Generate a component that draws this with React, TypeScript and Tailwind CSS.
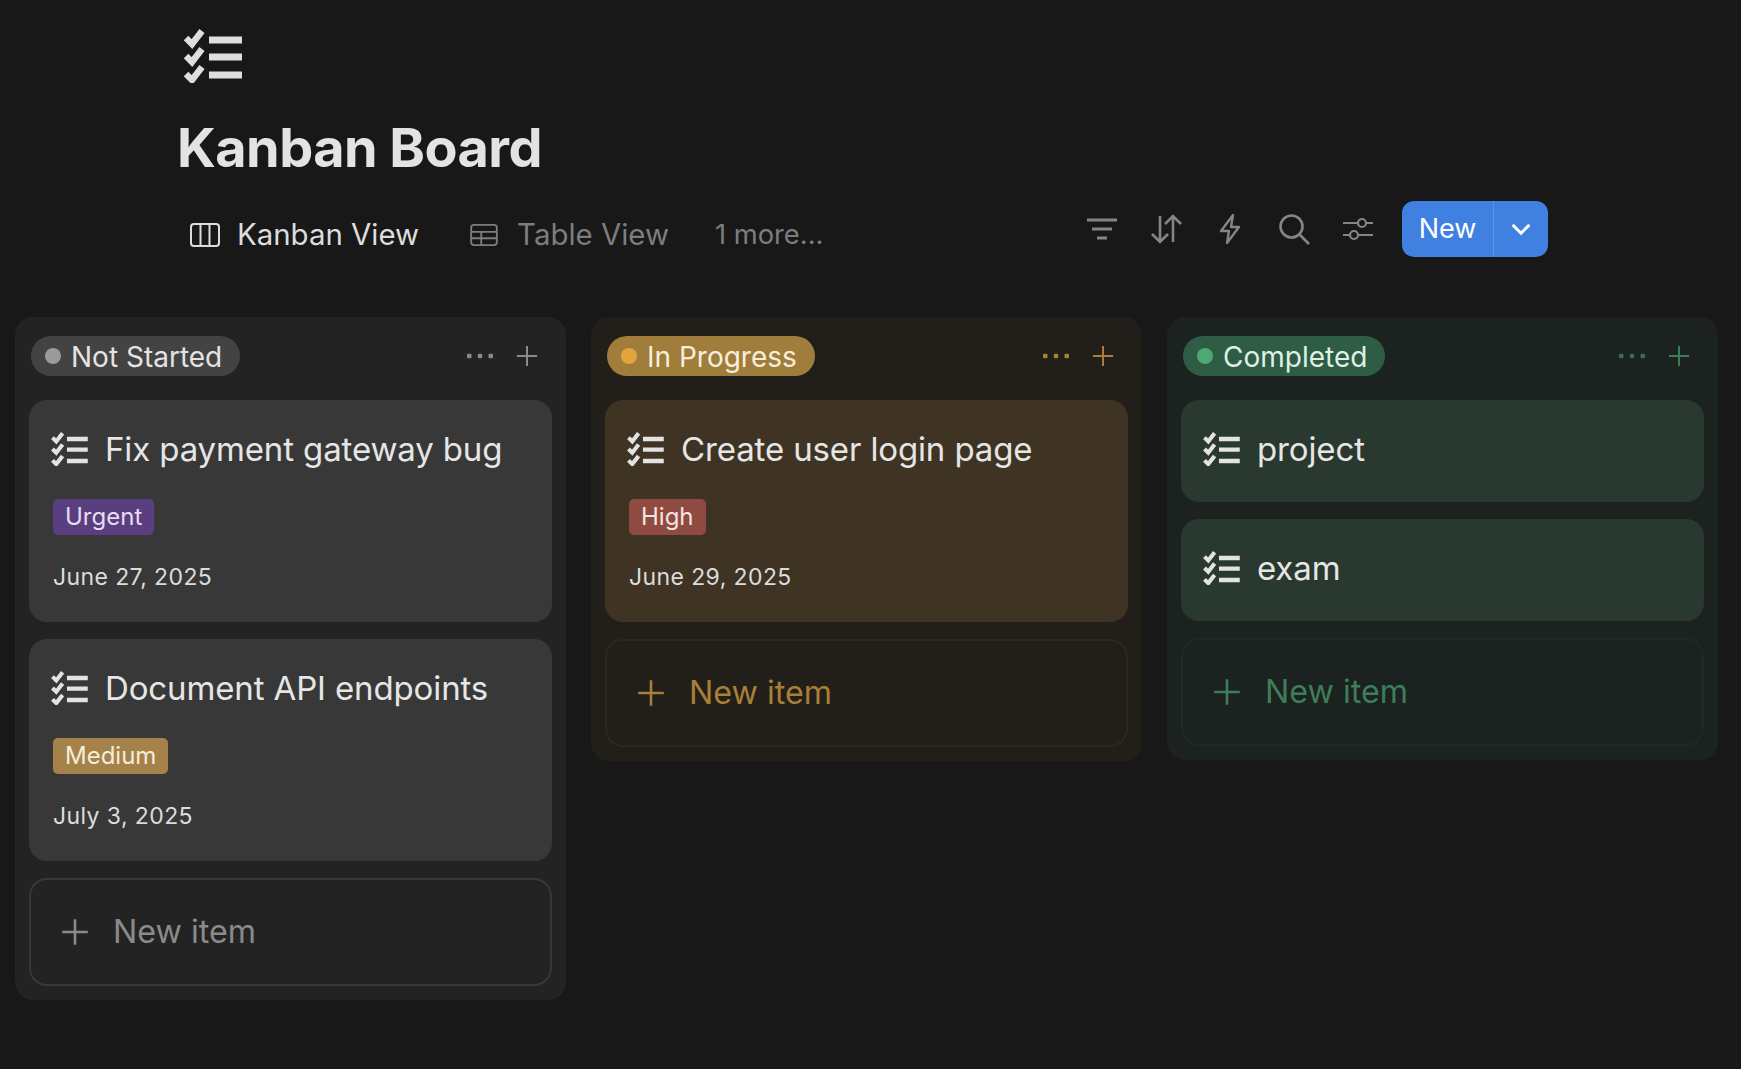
import React from "react";

const Check = ({ className = "" }: { className?: string }) => (
  <svg viewBox="0 0 58 54" className={className} fill="none" stroke="currentColor">
    <path d="M2 9l6 6L18 2M2 27l6 6 10-13M2 45l6 6 10-13" strokeWidth="6.5" />
    <path d="M25 11h33M25 28h33M25 46h33" strokeWidth="7" />
  </svg>
);

const Plus = ({ className = "" }: { className?: string }) => (
  <svg viewBox="0 0 24 24" className={className} fill="none" stroke="currentColor" strokeWidth="2.2">
    <path d="M12 1v22M1 12h22" />
  </svg>
);

const Dots = ({ className = "" }: { className?: string }) => (
  <svg viewBox="0 0 26 6" className={className} fill="currentColor">
    <rect x="0" y="0.75" width="4.5" height="4.5" rx="1.2" />
    <rect x="10.75" y="0.75" width="4.5" height="4.5" rx="1.2" />
    <rect x="21.5" y="0.75" width="4.5" height="4.5" rx="1.2" />
  </svg>
);

type Card = { title: string; tag?: string; tagCls?: string; date?: string };
type Col = {
  name: string;
  col: string;
  pill: string;
  dot: string;
  card: string;
  accent: string;
  dots: string;
  border: string;
  cards: Card[];
};

const cols: Col[] = [
  {
    name: "Not Started",
    col: "bg-[#232323]",
    pill: "bg-[#434343] text-[#e3e3e3]",
    dot: "bg-[#9b9b9b]",
    card: "bg-[#383838]",
    accent: "text-[#8a8a8a]",
    dots: "text-[#8a8a8a]",
    border: "border-[#383838]",
    cards: [
      { title: "Fix payment gateway bug", tag: "Urgent", tagCls: "bg-[#5a3f80] text-[#e6dcf2]", date: "June 27, 2025" },
      { title: "Document API endpoints", tag: "Medium", tagCls: "bg-[#a5824a] text-[#f6ecd8]", date: "July 3, 2025" },
    ],
  },
  {
    name: "In Progress",
    col: "bg-[#221e1a]",
    pill: "bg-[#a17d3c] text-[#f6eedd]",
    dot: "bg-[#e2a63c]",
    card: "bg-[#3f3424]",
    accent: "text-[#a87f36]",
    dots: "text-[#a87f36]",
    border: "border-[#2e2720]",
    cards: [
      { title: "Create user login page", tag: "High", tagCls: "bg-[#8f4a42] text-[#f5e4e0]", date: "June 29, 2025" },
    ],
  },
  {
    name: "Completed",
    col: "bg-[#1b2220]",
    pill: "bg-[#2f5c45] text-[#dff0e5]",
    dot: "bg-[#4fa872]",
    card: "bg-[#29392f]",
    accent: "text-[#3d7d59]",
    dots: "text-[#3a6a50]",
    border: "border-[#1f2925]",
    cards: [{ title: "project" }, { title: "exam" }],
  },
];

function TaskCard({ c, col }: { c: Card; col: Col }) {
  return (
    <div className={`rounded-[18px] px-[24px] pt-[31px] ${col.card} ${c.tag ? "h-[222px]" : "h-[102px]"}`}>
      <div className="flex items-center gap-[17px] h-[36px]">
        <Check className="w-[37px] h-[34px] text-[#e3e3e3] -ml-[2px] shrink-0" />
        <span className="text-[33px] leading-[36px] tracking-[-0.13px] text-[#e6e6e6]">{c.title}</span>
      </div>
      {c.tag && (
        <>
          <div className="mt-[32px] flex">
            <span className={`h-[36px] px-[12px] rounded-[5px] text-[24px] leading-[36px] ${c.tagCls}`}>{c.tag}</span>
          </div>
          <div className="mt-[26px] text-[23px] leading-[32px] tracking-[0.4px] text-[#dcdcdc]">{c.date}</div>
        </>
      )}
    </div>
  );
}

function Column({ col }: { col: Col }) {
  return (
    <div className={`w-[551px] rounded-[18px] px-[14px] pt-[19px] pb-[14px] ${col.col}`}>
      <div className="flex items-center justify-between h-[40px] pl-[2px] pr-[14px]">
        <div className={`h-[40px] rounded-full flex items-center pl-[14px] pr-[18px] gap-[10px] ${col.pill}`}>
          <span className={`w-[16px] h-[16px] rounded-full ${col.dot}`} />
          <span className="text-[28px] leading-[40px] pt-[1px]">{col.name}</span>
        </div>
        <div className="flex items-center gap-[23px]">
          <Dots className={`w-[26px] h-[6px] ${col.dots}`} />
          <Plus className={`w-[22px] h-[22px] ${col.accent}`} />
        </div>
      </div>
      <div className="mt-[24px] flex flex-col gap-[17px]">
        {col.cards.map((c) => (
          <TaskCard key={c.title} c={c} col={col} />
        ))}
        <div className={`h-[108px] rounded-[18px] border-2 ${col.border} flex items-center pl-[30px] gap-[24px]`}>
          <Plus className={`w-[28px] h-[28px] ${col.accent}`} />
          <span className={`text-[32.25px] leading-[40px] ${col.accent}`}>New item</span>
        </div>
      </div>
    </div>
  );
}

function Tool({ children }: { children: React.ReactNode }) {
  return <div className="w-[64px] flex items-center justify-center">{children}</div>;
}

export default function App() {
  return (
    <div className="min-h-[1069px] bg-[#181818] font-['Inter',sans-serif] overflow-hidden">
      <div className="pl-[177px] pt-[29px]">
        <Check className="w-[58px] h-[54px] ml-[7px] text-[#dedede]" />
        <h1 className="mt-[31px] text-[54px] leading-[68px] font-bold tracking-[-0.55px] text-[#e3e3e3]">Kanban Board</h1>
        <div className="mt-[19px] flex items-center h-[56px] pl-[13px] w-[1371px]">
          <svg viewBox="0 0 30 24" className="w-[30px] h-[24px] text-[#dcdcdc] mt-[11px]" fill="none" stroke="currentColor" strokeWidth="2">
            <rect x="1" y="1" width="28" height="22" rx="3" />
            <path d="M10.5 1v22M19.5 1v22" />
          </svg>
          <span className="ml-[17px] text-[29.4px] leading-[40px] text-[#dcdcdc] mt-[11px]">Kanban View</span>
          <svg viewBox="0 0 30 24" className="ml-[50px] w-[30px] h-[22px] text-[#7d7d7d] mt-[11px]" fill="none" stroke="currentColor" strokeWidth="2">
            <rect x="1" y="1" width="28" height="22" rx="3" />
            <path d="M1 8.5h28M1 15.5h28M12 8.5V23" />
          </svg>
          <span className="ml-[18px] text-[29.4px] leading-[40px] text-[#7d7d7d] mt-[11px]">Table View</span>
          <span className="ml-[46px] text-[27.3px] leading-[40px] text-[#7d7d7d] mt-[11px]">1 more...</span>
          <div className="ml-auto flex items-center text-[#858585]">
            <Tool>
              <svg viewBox="0 0 32 24" className="w-[32px] h-[24px]" fill="none" stroke="currentColor" strokeWidth="3">
                <path d="M1 3h30M6 12h20M11 21h10" />
              </svg>
            </Tool>
            <Tool>
              <svg viewBox="0 0 32 30" className="w-[32px] h-[30px]" fill="none" stroke="currentColor" strokeWidth="2.6">
                <path d="M10 2v26M2 20l8 8 8-8M23 28V2M15 10l8-8 8 8" />
              </svg>
            </Tool>
            <Tool>
              <svg viewBox="0 0 24 32" className="w-[24px] h-[32px]" fill="none" stroke="currentColor" strokeWidth="2.4" strokeLinejoin="round">
                <path d="M15 2L3 18h8l-2 12 12-16h-8z" />
              </svg>
            </Tool>
            <Tool>
              <svg viewBox="0 0 32 32" className="w-[32px] h-[32px]" fill="none" stroke="currentColor" strokeWidth="2.6">
                <circle cx="13.5" cy="13.5" r="11" />
                <path d="M21.5 21.5L31 31" />
              </svg>
            </Tool>
            <Tool>
              <svg viewBox="0 0 32 26" className="w-[32px] h-[26px]" fill="none" stroke="currentColor" strokeWidth="2.2">
                <path d="M1 7h15M24 7h7M1 19h7M16 19h15" />
                <circle cx="20" cy="7" r="4" />
                <circle cx="12" cy="19" r="4" />
              </svg>
            </Tool>
            <div className="ml-[12px] w-[146px] h-[56px] rounded-[12px] bg-[#3f80e0] flex text-white">
              <span className="w-[92px] text-center text-[27px] leading-[56px] font-normal border-r border-[#5a92e6]">New</span>
              <span className="flex-1 flex items-center justify-center">
                <svg viewBox="0 0 22 14" className="w-[22px] h-[13px]" fill="none" stroke="currentColor" strokeWidth="3.2">
                  <path d="M2 2l9 9 9-9" />
                </svg>
              </span>
            </div>
          </div>
        </div>
      </div>
      <div className="mt-[60px] ml-[15px] flex items-start gap-[25px]">
        {cols.map((c) => (
          <Column key={c.name} col={c} />
        ))}
      </div>
    </div>
  );
}
